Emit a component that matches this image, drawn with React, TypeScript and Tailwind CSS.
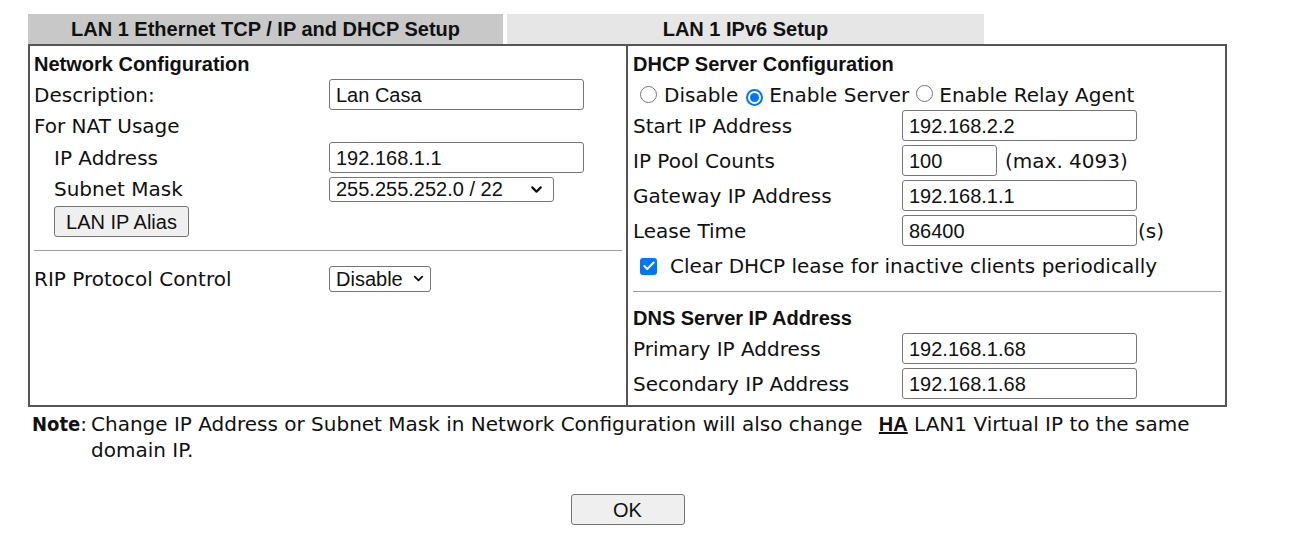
import { Check, ChevronDown } from 'lucide-react';

const label = "font-['DejaVu_Sans',Verdana,sans-serif] text-[20px] text-[#111]";
const heading = "font-['Liberation_Sans',Arial,sans-serif] font-bold text-[20px] text-[#111]";
const fieldText = "font-['Liberation_Sans',Arial,sans-serif] text-[20px] text-[#111]";

const TextBox = ({ value, width }: { value: string; width: string }) => (
  <div className={`${width} h-[31px] shrink-0 rounded-[3px] border border-[#767676] bg-white px-[6px] flex items-center ${fieldText}`}>
    {value}
  </div>
);

const Radio = ({ checked }: { checked?: boolean }) => (
  <span
    className={`inline-flex h-[17px] w-[17px] shrink-0 items-center justify-center rounded-full bg-white ${
      checked ? 'border-2 border-[#0075ff]' : 'border border-[#767676]'
    }`}
  >
    {checked && <span className="h-[9px] w-[9px] rounded-full bg-[#0075ff]" />}
  </span>
);

const Row = ({ name, children, indent, h }: { name: string; children?: React.ReactNode; indent?: boolean; h: string }) => (
  <div className={`flex items-center ${h}`}>
    <div className={`${label} w-[295px] ${indent ? 'pl-[20px]' : ''}`}>{name}</div>
    {children}
  </div>
);

const RRow = ({ name, children }: { name: string; children?: React.ReactNode }) => (
  <div className="flex h-[35px] items-start">
    <div className={`${label} flex h-[31px] w-[269px] items-center`}>{name}</div>
    {children}
  </div>
);

export default function App() {
  return (
    <div className="min-h-[557px] w-[1306px] bg-white pt-[14px]">
      <div className="ml-[28px] w-[1199px]">
        <div className="flex h-[30px]">
          <div className={`flex w-[475px] items-center justify-center bg-[#c8c8c8] ${heading}`}>
            LAN 1 Ethernet TCP / IP and DHCP Setup
          </div>
          <div className={`ml-[4px] flex w-[477px] items-center justify-center bg-[#e6e6e6] ${heading}`}>
            LAN 1 IPv6 Setup
          </div>
        </div>

        <div className="flex h-[363px] border-2 border-[#555]">
          {/* left column */}
          <div className="w-[598px] border-r-2 border-[#555] pl-[4px] pr-[4px]">
            <div className={`flex h-[33px] items-center pt-[3px] ${heading}`}>Network Configuration</div>
            <Row name="Description:" h="h-[31px]">
              <TextBox value="Lan Casa" width="w-[255px]" />
            </Row>
            <Row name="For NAT Usage" h="h-[32px]" />
            <Row name="IP Address" indent h="h-[31px]">
              <TextBox value="192.168.1.1" width="w-[255px]" />
            </Row>
            <Row name="Subnet Mask" indent h="h-[32px]">
              <div className={`flex h-[25px] w-[225px] items-center justify-between rounded-[3px] border border-[#767676] bg-white pl-[6px] pr-[8px] ${fieldText}`}>
                255.255.252.0 / 22
                <ChevronDown size={17} strokeWidth={3} className="text-[#111]" />
              </div>
            </Row>
            <div className="flex h-[33px] items-center pl-[20px]">
              <div className={`flex h-[31px] w-[135px] items-center justify-center rounded-[3px] border border-[#767676] bg-[#efefef] ${fieldText}`}>
                LAN IP Alias
              </div>
            </div>
            <div className="mt-[12px] border-t border-[#a0a0a0]" />
            <Row name="RIP Protocol Control" h="h-[55px]">
              <div className={`flex h-[26px] w-[102px] items-center justify-between rounded-[3px] border border-[#767676] bg-white pl-[6px] pr-[4px] ${fieldText}`}>
                Disable
                <ChevronDown size={15} strokeWidth={3} className="text-[#111]" />
              </div>
            </Row>
          </div>

          {/* right column */}
          <div className="flex-1 pl-[5px] pr-[4px]">
            <div className={`flex h-[33px] items-center pt-[3px] ${heading}`}>DHCP Server Configuration</div>
            <div className={`flex h-[31px] items-center pl-[7px] ${label}`}>
              <Radio />
              <span className="ml-[7px]">Disable</span>
              <span className="ml-[8px]"><Radio checked /></span>
              <span className="ml-[6px]">Enable Server</span>
              <span className="ml-[7px]"><Radio /></span>
              <span className="ml-[6px]">Enable Relay Agent</span>
            </div>
            <RRow name="Start IP Address">
              <TextBox value="192.168.2.2" width="w-[235px]" />
            </RRow>
            <RRow name="IP Pool Counts">
              <TextBox value="100" width="w-[95px]" />
              <span className={`ml-[8px] flex h-[31px] items-center ${label}`}>(max. 4093)</span>
            </RRow>
            <RRow name="Gateway IP Address">
              <TextBox value="192.168.1.1" width="w-[235px]" />
            </RRow>
            <RRow name="Lease Time">
              <TextBox value="86400" width="w-[235px]" />
              <span className={`ml-[1px] flex h-[31px] items-center ${label}`}>(s)</span>
            </RRow>
            <div className={`flex h-[32px] items-center pl-[7px] ${label}`}>
              <span className="mr-[13px] flex h-[17px] w-[17px] items-center justify-center rounded-[3px] bg-[#0075ff]">
                <Check size={14} strokeWidth={3.5} className="text-white" />
              </span>
              Clear DHCP lease for inactive clients periodically
            </div>
            <div className="mt-[9px] border-t border-[#a0a0a0]" />
            <div className={`flex h-[41px] items-center pt-[10px] ${heading}`}>DNS Server IP Address</div>
            <RRow name="Primary IP Address">
              <TextBox value="192.168.1.68" width="w-[235px]" />
            </RRow>
            <RRow name="Secondary IP Address">
              <TextBox value="192.168.1.68" width="w-[235px]" />
            </RRow>
          </div>
        </div>

        <div className={`mt-[4px] flex leading-[26px] ${label}`}>
          <span className="w-[63px] shrink-0 pl-[4px]">
            <b className="font-['DejaVu_Sans_Condensed','Liberation_Sans',sans-serif] font-bold">Note</b>:
          </span>
          <div>
            <div className="flex items-baseline whitespace-pre">
              <span>Change IP Address or Subnet Mask in Network Configuration will also change </span>
              <span className="ml-[10px] font-['Liberation_Sans',Arial,sans-serif] font-bold underline">HA</span>
              <span> LAN1 Virtual IP to the same</span>
            </div>
            <div>domain IP.</div>
          </div>
        </div>

        <div className="mt-[31px] flex justify-center">
          <div className={`flex h-[31px] w-[114px] items-center justify-center rounded-[3px] border border-[#767676] bg-[#efefef] ${fieldText}`}>
            OK
          </div>
        </div>
      </div>
    </div>
  );
}
